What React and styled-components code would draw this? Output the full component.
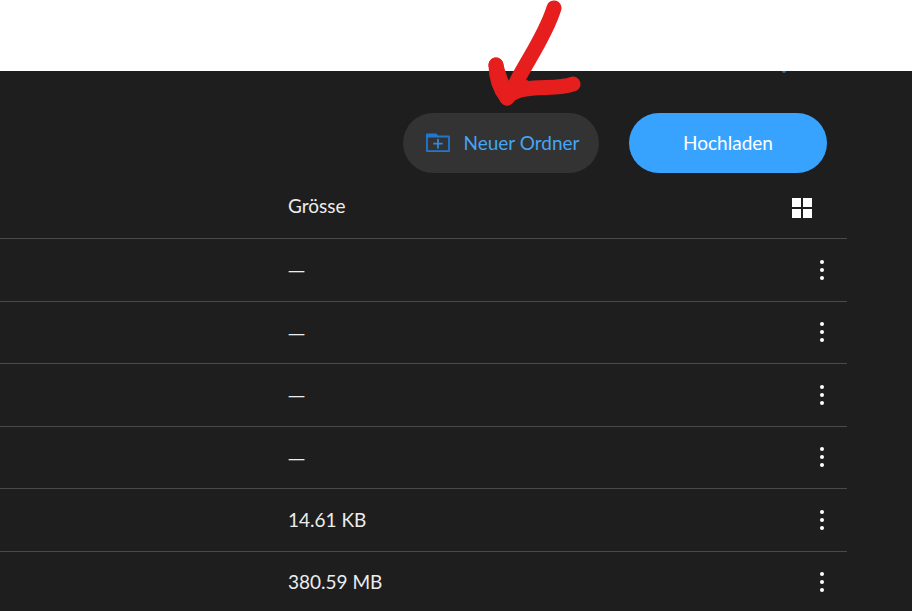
import styled, { createGlobalStyle } from 'styled-components';

const files = [
    { id: 1, size: null },
    { id: 2, size: null },
    { id: 3, size: null },
    { id: 4, size: null },
    { id: 5, size: '14.61 KB' },
    { id: 6, size: '380.59 MB' },
];

const FolderPlusIcon = () => (
    <svg width='24' height='20' viewBox='0 0 24 20' fill='none' aria-hidden='true'>
        <path d='M1 3.5V18.2H23V3.5H11' stroke='#2178cf' strokeWidth='1.8' strokeLinejoin='round' />
        <path d='M0 4.6V1.6Q0 .6 1 .6H9.8Q10.6 .6 11.2 1.4L12.8 3.4V4.6Z' fill='#2178cf' />
        <path d='M12 6V15.4M7.3 10.7H16.7' stroke='#3288dc' strokeWidth='1.8' />
    </svg>
);

const GridIcon = () => (
    <svg width='20' height='20' viewBox='0 0 20 20' fill='#fff' aria-hidden='true'>
        <path d='M0 0H9V9H0ZM11 0H20V9H11ZM0 11H9V20H0ZM11 11H20V20H11Z' />
    </svg>
);

const MoreIcon = () => (
    <svg width='4' height='20' viewBox='0 0 4 20' fill='#fff' aria-hidden='true'>
        <circle cx='2' cy='2' r='2' />
        <circle cx='2' cy='10' r='2' />
        <circle cx='2' cy='18' r='2' />
    </svg>
);

const App = () => {
    return (
        <>
            <GlobalStyle />
            <Page>
                <TopBar />
                <Panel>
                    <Marker />
                    <Actions>
                        <ButtonWrapper>
                            <Button type='button'>
                                <FolderPlusIcon />
                                Neuer Ordner
                            </Button>
                            <Arrow viewBox='0 0 110 113' fill='none' aria-hidden='true'>
                                <path d='M74 8C66 34 49 58 39 77C35 85 31 92 27 98' />
                                <path d='M16 65C16 79 20 89 27 98C34 90 43 89 54 88C70 87 82 88 93 84' />
                                <path d='M16 65C17 71 20 80 27 97' />
                                <path d='M32 81L24 98L44 91L48 80Z' fill='#e61e1e' stroke='none' />
                            </Arrow>
                        </ButtonWrapper>
                        <Button type='button' $primary>
                            Hochladen
                        </Button>
                    </Actions>
                    <Table>
                        <thead>
                            <tr>
                                <NameHead />
                                <SizeHead scope='col'>Grösse</SizeHead>
                                <ToolHead>
                                    <IconButton type='button' aria-label='Kachelansicht' $size={20}>
                                        <GridIcon />
                                    </IconButton>
                                </ToolHead>
                            </tr>
                        </thead>
                        <tbody>
                            {files.map((file) => (
                                <Row key={file.id}>
                                    <Cell />
                                    <Cell>{file.size || <Dash>—</Dash>}</Cell>
                                    <MenuCell>
                                        <IconButton type='button' aria-label='Mehr Optionen' $size={10}>
                                            <MoreIcon />
                                        </IconButton>
                                    </MenuCell>
                                </Row>
                            ))}
                        </tbody>
                    </Table>
                </Panel>
            </Page>
        </>
    );
};

const GlobalStyle = createGlobalStyle`
    * {
        box-sizing: border-box;
    }

    body {
        margin: 0;
        background: #1e1e1e;
        color: #ececec;
        font: 400 19px/24px Lato, 'Noto Sans', sans-serif;
    }
`;

const Page = styled.main`
    display: flex;
    flex-direction: column;
    height: 100vh;
    overflow: hidden;
`;

const TopBar = styled.header`
    flex: none;
    height: 71px;
    background: #fff;
`;

const Panel = styled.section`
    position: relative;
    flex: 1;
    padding: 42px 65px 0 0;
    background: #1e1e1e;
`;

const Marker = styled.span`
    position: absolute;
    top: 0;
    right: 126px;
    width: 4px;
    height: 2px;
    border-radius: 0 0 2px 2px;
    background: #2b6f9c;
`;

const Actions = styled.div`
    display: flex;
    justify-content: flex-end;
    gap: 30px;
    padding-right: 20px;
`;

const ButtonWrapper = styled.div`
    position: relative;
`;

const Button = styled.button`
    display: flex;
    align-items: center;
    justify-content: center;
    gap: 13px;
    min-width: ${({ $primary }) => ($primary ? '198px' : '196px')};
    height: 60px;
    padding: ${({ $primary }) => ($primary ? '0 20px' : '0 18px 0 22px')};
    border: 0;
    border-radius: 30px;
    background: ${({ $primary }) => ($primary ? '#38a3ff' : '#333')};
    color: ${({ $primary }) => ($primary ? '#fff' : '#45a5f5')};
    font: inherit;
    cursor: pointer;
`;

/* hand drawn pointer above the button */
const Arrow = styled.svg`
    position: absolute;
    left: 77px;
    top: -113px;
    width: 110px;
    height: 113px;
    stroke: #e61e1e;
    stroke-width: 15px;
    stroke-linecap: round;
    stroke-linejoin: round;
    pointer-events: none;
`;

const Table = styled.table`
    width: 100%;
    border-collapse: collapse;
    table-layout: fixed;
`;

const Head = styled.th`
    height: 65px;
    padding: 2px 0 0;
    border-bottom: 1px solid #4a4a4a;
    font-weight: 400;
    text-align: left;
`;

const NameHead = styled(Head).attrs({ as: 'td' })`
    width: 34%;
`;

const SizeHead = styled(Head)``;

const ToolHead = styled(Head).attrs({ as: 'td' })`
    width: 80px;
    padding: 5px 35px 0 0;
`;

const Cell = styled.td`
    height: 63px;
    padding: 0;
`;

const Row = styled.tr`
    border-bottom: 1px solid #4a4a4a;

    &:nth-child(even) ${Cell} {
        height: 62px;
    }
`;

const MenuCell = styled(Cell)`
    padding-right: 20px;
`;

const Dash = styled.span`
    font-family: 'Noto Sans', sans-serif;
    font-size: 17px;
`;

const IconButton = styled.button`
    display: flex;
    align-items: center;
    justify-content: center;
    width: ${({ $size }) => $size}px;
    height: 20px;
    margin-left: auto;
    padding: 0;
    border: 0;
    background: none;
    cursor: pointer;
`;

export default App;
